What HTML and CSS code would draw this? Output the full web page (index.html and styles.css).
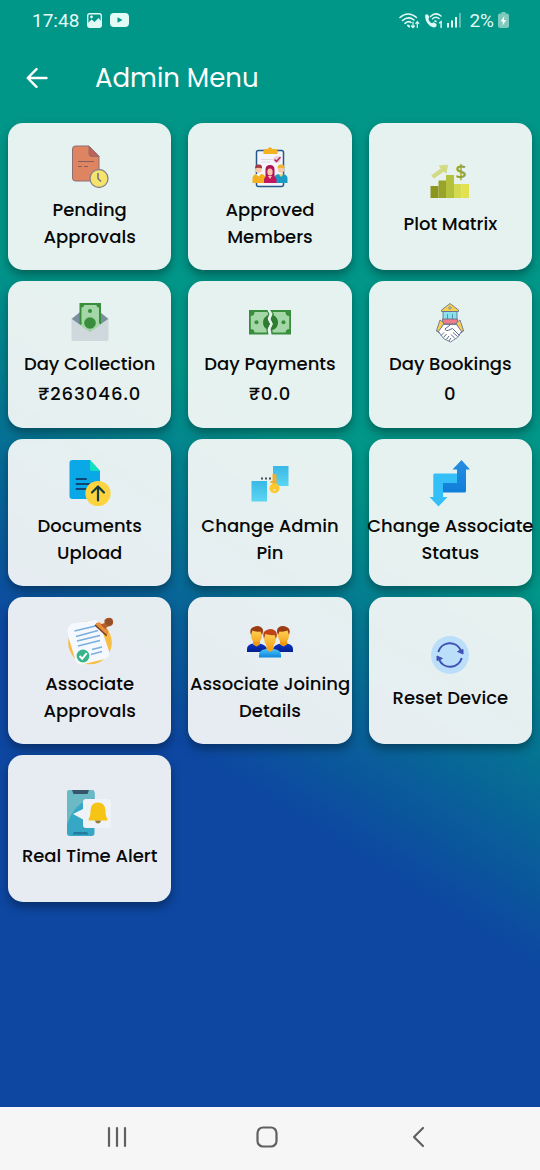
FILE: index.html
```html
<!DOCTYPE html>
<html lang="en">
<head>
  <meta charset="UTF-8" />
  <meta name="viewport" content="width=device-width, initial-scale=1.0"/>
  <title>Admin Menu</title>
  <link rel="stylesheet" href="styles.css">
</head>
<body>

  <div class="screen">
    <div class="status-bar">
      <div class="status-group">
        <span class="clock">17:48</span>
        <svg class="status-icon" width="15" height="15" viewBox="0 0 15 15">
          <rect x="0.7" y="0.7" width="13.6" height="13.6" rx="2" fill="none" stroke="#e2faf5" stroke-width="1.4"/>
          <path d="M1 10l3.5-3.500 3 2.500 4-4L14 8v6H1z" fill="#e2faf5"/>
          <circle cx="4.500" cy="4" r="1.400" fill="#e2faf5"/>
        </svg>
        <svg class="status-icon" width="19" height="14" viewBox="0 0 19 14">
          <rect width="19" height="14" rx="4" fill="#e2faf5"/>
          <path d="M7.500 4.200v5.600l5-2.800z" fill="#009688"/>
        </svg>
      </div>
      <div class="status-group status-right">
        <svg width="21" height="17" viewBox="0 0 21 17" fill="none" stroke="#e2faf5" stroke-width="1.600" stroke-linecap="round">
          <path d="M1 5.500Q9 -1.500 17.500 5.500M3.500 8.500Q9.500 3.500 15 8M6 11.300Q9.500 8.500 12 10.500"/>
          <path d="M9 13.500l1.200 1" stroke-width="2"/>
          <path d="M14 10v5.500M12.500 14l1.500 1.700 1.500-1.700M18.300 15.500V9.800M16.800 11.300l1.500-1.700 1.500 1.700" stroke-width="1.200"/>
        </svg>
        <svg width="19" height="17" viewBox="0 0 19 17" fill="none" stroke="#e2faf5" stroke-linecap="round">
          <path d="M1 3.500Q3 1 4.500 3.500L5.300 5.500Q4 6.800 4.800 8.200 6 10.500 8 11.300L9.500 10.300 12.500 12Q13 15.500 9.500 15.500 1.500 13 1 3.500z" fill="#e2faf5" stroke="none"/>
          <path d="M6.500 4.500Q11.500 -0.500 17 4M8.500 6.800Q11.800 3.700 15 6.500M11 9l1 .6" stroke-width="1.500"/>
          <path d="M15.500 10.800l1.600-1.100v5.800" stroke-width="1.400"/>
        </svg>
        <svg width="15" height="15" viewBox="0 0 15 15" fill="#e2faf5">
          <rect x="0" y="10" width="2" height="4.500"/>
          <rect x="4" y="7.500" width="2" height="7"/>
          <rect x="8" y="4" width="2" height="10.500"/>
          <rect x="12" y="0" width="2" height="14.500" opacity=".4"/>
        </svg>
        <span class="battery">2%</span>
        <svg width="11" height="17" viewBox="0 0 11 17">
          <path d="M3.500 1.500V0h4v1.500H9a2 2 0 0 1 2 2V14a2 2 0 0 1-2 2H2a2 2 0 0 1-2-2V3.500a2 2 0 0 1 2-2z" fill="#7fcabf"/>
          <path d="M6.300 4L2.700 9.500h2.200L4.500 13.500 8.300 8H6z" fill="#fff"/>
        </svg>
      </div>
    </div>

    <header class="app-bar">
      <button class="back" aria-label="Back">
        <svg width="22" height="20" viewBox="0 0 22 20" fill="none" stroke="#fff" stroke-width="2.400" stroke-linecap="round" stroke-linejoin="round">
          <path d="M20.500 10H2M10.500 1.200L1.700 10l8.800 8.800"/>
        </svg>
      </button>
      <h1>Admin Menu</h1>
    </header>

    <main class="menu">
      <a class="card" href="#pending">
        <svg class="icon" viewBox="0 0 48 48">
          <path d="M9.500 3H23l10 10.500V35a3 3 0 0 1-3 3H9.500a3 3 0 0 1-3-3V6a3 3 0 0 1 3-3z" fill="#df8460" stroke="#8f6e72"/>
          <path d="M23 3v7.500a3 3 0 0 0 3 3h7z" fill="#bd6259" stroke="#8f6e72"/>
          <path d="M12 18.500h16M12 23.500h4M18 23.500h4" stroke="#8b5c5e" stroke-width="1.200"/>
          <circle cx="33" cy="35.500" r="9" fill="#f5e36c" stroke="#86818a" stroke-width="1.300"/>
          <path d="M32 30v5.500l3 3" fill="none" stroke="#73777f" stroke-width="1.600"/>
        </svg>
        <span class="label">Pending<br>Approvals</span>
      </a>

      <a class="card" href="#members">
        <svg class="icon" viewBox="0 0 48 48">
          <rect x="10.500" y="7.500" width="27" height="36" rx="2" fill="#f4f5fb" stroke="#26588b" stroke-width="1.500"/>
          <path d="M17.500 11V8a2 2 0 0 1 2-2h2q2.500-3.500 5 0h3a2 2 0 0 1 2 2v3z" fill="#f4b223"/>
          <path d="M15 16.500h12M15 19h9" stroke="#dfd8e3"/>
          <circle cx="31" cy="16.500" r="3.500" fill="#ead1df"/>
          <path d="M28.500 16.500l2 2 4-4.500" fill="none" stroke="#b71f5c" stroke-width="1.500"/>
          <path d="M6.500 40v-4.500q0-4 5-4.500h4q4 .5 4 4.500V40z" fill="#f3b11f"/>
          <circle cx="12.500" cy="26.500" r="3.200" fill="#f7c9a8"/>
          <path d="M9 25.500Q9 21 13 21.500q3.500 0 3 4-3.500-1.500-7 0z" fill="#a33a45"/>
          <path d="M10 31l2.500 2.500L15 31" fill="#fff"/>
          <path d="M28 40v-4.500q0-4 5-4.500h3.500q5 .5 5 4.500V40z" fill="#199cc3"/>
          <circle cx="35" cy="26.500" r="3.200" fill="#f7c9a8"/>
          <path d="M31.500 25.500q0-4.500 4-4 3.500 0 3 4-3.500-1.500-7 0z" fill="#f0b52c"/>
          <path d="M32.500 31l2.500 3 2.500-3" fill="#f6d568"/>
          <path d="M19.500 35v-8.500q0-4.500 4.500-4.500t4.500 4.500V35z" fill="#ae1557"/>
          <path d="M18 40v-3q0-3.500 4-4h4.500q4 .5 4 4v3z" fill="#c4165f"/>
          <ellipse cx="24" cy="29" rx="2.700" ry="3.500" fill="#f9c6ad"/>
          <path d="M22 33h4l-2 3z" fill="#f9c6ad"/>
        </svg>
        <span class="label">Approved<br>Members</span>
      </a>

      <a class="card" href="#plots">
        <svg class="icon" viewBox="0 0 48 48">
          <path d="M4.500 29h8v12h-8z" fill="#8c951e"/>
          <path d="M12.500 23.500H20V41h-7.500z" fill="#99a32a"/>
          <path d="M20 18h8v23h-8z" fill="#b4c13d"/>
          <path d="M28 27h7.500v14H28z" fill="#d3d950"/>
          <path d="M35.500 27H43v14h-7.500z" fill="#e2e250"/>
          <path d="M5.800 18.500l9.500-7-2-2.500 8.200-.8-1.500 8-2-2.300-10 7.200z" fill="#d2db83" stroke="#d2db83"/>
          <text class="dollar" x="35" y="22" text-anchor="middle">$</text>
        </svg>
        <span class="label">Plot Matrix</span>
      </a>

      <a class="card" href="#collection">
        <svg class="icon" viewBox="0 0 48 48">
          <path d="M5.500 22L14 15h20l8.500 7L24 35z" fill="#78909c"/>
          <path d="M13.500 6h21.500v24L24 37 13.500 30z" fill="#388e3c"/>
          <path d="M18 8h12.500q0 2.500 2.500 2.500V26L24 32l-8.500-6V10.500Q18 10.500 18 8z" fill="#a5d6a7"/>
          <circle cx="24" cy="14" r="2" fill="#388e3c"/>
          <path d="M5.500 22L24 34.500 42.500 22v20a2 2 0 0 1-2 2h-33a2 2 0 0 1-2-2z" fill="#cfd8dc"/>
          <path d="M14 28l10 7 11-7.500-3.500-2.300L24 30l-6.500-4.500z" fill="#a5d6a7"/>
          <circle cx="24" cy="26" r="5.800" fill="#388e3c"/>
        </svg>
        <span class="label">Day Collection</span>
        <span class="value">₹263046.0</span>
      </a>

      <a class="card" href="#payments">
        <svg class="icon" viewBox="0 0 48 48">
          <path d="M3 13h18.500l2 4-2 5 2.500 5-2.500 5 1 5.500H3z" fill="#388e3c"/>
          <path d="M8.500 15h12.800l.8 2-1.800 5 2.500 5-2.500 5 .5 3.500H8.500Q8.500 32 4.800 32V19Q8.500 19 8.500 15z" fill="#a5d6a7"/>
          <path d="M45 13H24l2.500 4-2 5 2.500 5-2.500 5 1 5.500H45z" fill="#388e3c"/>
          <path d="M39.500 15H26.500l1.500 2-1.800 5 2.300 5-2.300 5 .5 3.500h13q0-3.500 3.500-3.500V19q-3.700 0-3.700-4z" fill="#a5d6a7"/>
          <path d="M22.500 18q-5.500 2-5.500 7.500t5.500 7.500l-1-1 2.500-5-2.500-5z" fill="#2e7d32"/>
          <path d="M27 18q5 2 5 7.500T27 33l-2-1 2-5-2-5z" fill="#2e7d32"/>
          <circle cx="10.500" cy="25.300" r="2" fill="#388e3c"/>
          <circle cx="37.500" cy="25.300" r="2" fill="#388e3c"/>
          <path d="M22.700 13l2.300 4-2 5 2.500 5-2.500 5 1.200 5.500" fill="none" stroke="#e8f3f1" stroke-width="2"/>
        </svg>
        <span class="label">Day Payments</span>
        <span class="value">₹0.0</span>
      </a>

      <a class="card" href="#bookings">
        <svg class="icon" viewBox="0 0 48 48" stroke="#596889" stroke-width=".8" stroke-linejoin="round">
          <path d="M24 6.500l8.500 6.500v1.500h-17V13z" fill="#f5d04e"/>
          <circle cx="24" cy="11" r="1.200" fill="#fff"/>
          <path d="M17 14.500h14v8H17z" fill="#8be0ee"/>
          <path d="M21.500 17v5M26.500 17v5" stroke="#4a7f9b"/>
          <path d="M16.500 22h15v5h-15z" fill="#ef7d85"/>
          <path d="M14 23l4 3-5 9-2.500-1.500z" fill="#f6ce55"/>
          <path d="M34 23l-4 3 5 9 2.500-1.500z" fill="#f6ce55"/>
          <path d="M17.500 27.500l6.500 0 6.500 0 5 7-4 6-7 4.500-7-3.500-5-7z" fill="#fff"/>
          <path d="M24 28l-5 4q1 3 5 .500l2.500-1 7 7M15 38.500l3-3M17.500 40.500l3-3.500M20.500 42.500l2.500-3.500M23 44l2-3M29 41.500l-4-4M31.500 39.500l-4.500-4" fill="none" stroke-width="1"/>
          <path d="M10 33.500l4 3M38 33.500l-4 3" fill="none"/>
        </svg>
        <span class="label">Day Bookings</span>
        <span class="value">0</span>
      </a>

      <a class="card" href="#documents">
        <svg class="icon" viewBox="0 0 48 48">
          <path d="M6.500 1H24l10 11v25a3 3 0 0 1-3 3H6.500a3 3 0 0 1-3-3V4a3 3 0 0 1 3-3z" fill="#0aa8e6"/>
          <path d="M24 1v8.500a2.500 2.500 0 0 0 2.500 2.500H34z" fill="#12e0c0"/>
          <path d="M10.500 20H20M10.500 25H23M10.500 30H20" stroke="#0b4770" stroke-width="2" stroke-linecap="round"/>
          <circle cx="32" cy="34.500" r="12.600" fill="#fdd33f"/>
          <path d="M32 41.500V28M26 33.500l6-6 6 6" fill="none" stroke="#173b3d" stroke-width="2.200" stroke-linecap="round" stroke-linejoin="round"/>
        </svg>
        <span class="label">Documents<br>Upload</span>
      </a>

      <a class="card" href="#pin">
        <svg class="icon" viewBox="0 0 48 48">
          <defs>
            <linearGradient id="tile" x1="0" y1="0" x2="0" y2="1">
              <stop offset="0" stop-color="#3ab8e6"/>
              <stop offset="1" stop-color="#5bd6f2"/>
            </linearGradient>
          </defs>
          <path d="M5.500 22H21v20.500H5.500z" fill="url(#tile)"/>
          <path d="M27 7h15.500v20H27z" fill="url(#tile)"/>
          <path d="M15 18.500h2v2h-2zM19 18.500h2v2h-2zM23 18.500h2v2h-2z" fill="#424d54"/>
          <path d="M26.500 15h4v12h-4z" fill="#f3ae2c"/>
          <path d="M24.500 22h3v2h-3z" fill="#f3ae2c"/>
          <circle cx="28.500" cy="29.300" r="5" fill="#fec72e"/>
          <circle cx="28.500" cy="31" r="1.100" fill="#fff1b5"/>
        </svg>
        <span class="label">Change Admin<br>Pin</span>
      </a>

      <a class="card" href="#status">
        <svg class="icon" viewBox="0 0 48 48">
          <defs>
            <linearGradient id="rise" x1="0" y1="1" x2="0" y2="0">
              <stop offset="0" stop-color="#0f7fda"/>
              <stop offset="1" stop-color="#278ce1"/>
            </linearGradient>
          </defs>
          <path d="M35.500 1L44 10.500h-4v21.500q0 1.500-1.500 1.500H17V24h14V10.500h-4.500z" fill="url(#rise)"/>
          <path d="M8.500 14.500H31V24H17v14h4.500L12.500 47.500 3.500 38H7.300V16q0-1.500 1.200-1.500z" fill="#35bff8"/>
        </svg>
        <span class="label">Change Associate<br>Status</span>
      </a>

      <a class="card" href="#approvals">
        <svg class="icon" viewBox="0 0 48 48">
          <circle cx="24" cy="25.500" r="21.800" fill="#f7bd45"/>
          <path d="M1.500 14Q2 6 10 6L29 3q3 0 4.500 3L43 34q1.500 6-4 8L16 47.500Q11.500 48 10 44.500L3 22z" fill="#f5f8fd"/>
          <path d="M8.500 14l21-5M10 19.500l22-6M11 24l23-5.500M12 29l22-5.500M26 32.500l10-2.500M25 37.500l11-3" stroke="#78aee0" stroke-width="1.300"/>
          <circle cx="17" cy="39" r="6.400" fill="#36b48b"/>
          <path d="M13.500 39l2.700 2.700 4.500-5.500" fill="none" stroke="#fff" stroke-width="2"/>
          <path d="M28.500 8.500l12 11 1-3.500L31 6z" fill="#6f3b20"/>
          <path d="M29.500 7.500q2-3.500 5-1.500l7 6.500q2 2-.5 5.500z" fill="#e9903d"/>
          <path d="M34.500 7.500l4-1.500Q37 1.500 43 .8q4 0 4.200 4.200 0 4-4.700 4.500-2 0-3 3z" fill="#b65f2b"/>
          <circle cx="43" cy="4.800" r="3.600" fill="#945026"/>
        </svg>
        <span class="label">Associate<br>Approvals</span>
      </a>

      <a class="card" href="#joining">
        <svg class="icon" viewBox="0 0 48 48">
          <defs>
            <linearGradient id="navy" x1="0" y1="0" x2="0" y2="1">
              <stop offset="0" stop-color="#0837ca"/>
              <stop offset="1" stop-color="#04208b"/>
            </linearGradient>
            <linearGradient id="sky" x1="0" y1="0" x2="0" y2="1">
              <stop offset="0" stop-color="#48c5fa"/>
              <stop offset="1" stop-color="#1085d9"/>
            </linearGradient>
            <linearGradient id="face" x1="0" y1="0" x2="0" y2="1">
              <stop offset="0" stop-color="#ffd85c"/>
              <stop offset="1" stop-color="#f7a51e"/>
            </linearGradient>
          </defs>
          <path d="M1 35v-3q0-4.500 6-5.500h6q7 1 8 5.500v3zM47 35v-3q0-4.500-6-5.500h-6q-7 1-8 5.500v3z" fill="url(#navy)"/>
          <path d="M7 24h7v3.500l-3.500 2-3.500-2zM34 24h7v3.500l-3.500 2-3.500-2z" fill="#ef9816"/>
          <ellipse cx="10.500" cy="18.500" rx="5.500" ry="7" fill="url(#face)"/>
          <ellipse cx="37.500" cy="18.500" rx="5.500" ry="7" fill="url(#face)"/>
          <path d="M5 18q-2-6 1.500-7.500 6-3 9.500.5 2 2 0 7l-1.500-3.500q-5 .5-8-1zM43 18q2-6-1.500-7.500-6-3-9.500.5-2 2 0 7l1.500-3.500q5 .5 8-1z" fill="#9b3c12"/>
          <path d="M13 40.500V38q0-5 7-6h8q7 1 7 6v2.500z" fill="url(#sky)"/>
          <path d="M20.500 28h7v4.500L24 35l-3.500-2.500z" fill="#f5a31b"/>
          <ellipse cx="24" cy="22.500" rx="5.800" ry="7.500" fill="url(#face)"/>
          <path d="M18 22q-2-6 1-8 6-4 10.500 0 2.500 2.500.5 8l-1.500-4q-5 .5-9-1z" fill="#c04415"/>
        </svg>
        <span class="label">Associate Joining<br>Details</span>
      </a>

      <a class="card" href="#reset">
        <svg class="icon" viewBox="0 0 48 48">
          <circle cx="24" cy="24" r="19" fill="#bbdefb"/>
          <path d="M12.300 21a12 12 0 0 1 22.400-2M35.700 27a12 12 0 0 1-22.400 2" fill="none" stroke="#3f51b5" stroke-width="2"/>
          <path d="M31.500 20.500l5.500-2v4.500zM16.500 27.500l-5.500 2v-4.500z" fill="#3f51b5" stroke="#3f51b5" stroke-linejoin="round"/>
        </svg>
        <span class="label">Reset Device</span>
      </a>

      <a class="card" href="#alert">
        <svg class="icon" viewBox="0 0 48 48">
          <path d="M4 1h21.500a3 3 0 0 1 3 3v40a3 3 0 0 1-3 3H4a3 3 0 0 1-3-3V4a3 3 0 0 1 3-3z" fill="#36a8c5"/>
          <path d="M4 1h21.500a3 3 0 0 1 3 3v5Q8 13 1 36V4a3 3 0 0 1 3-3z" fill="#6bb9c5"/>
          <path d="M6 1h17l-1.500 4h-14z" fill="#36546a"/>
          <path d="M8 43h13l1.500 2.500h-16z" fill="#237ca0"/>
          <path d="M20 10h22q3 0 3 3v23q0 3-3 3H20q-3 0-3-3v-5.500L7 25l10-5v-7q0-3 3-3z" fill="#eff3f8"/>
          <path d="M32 13.500q7 0 7.500 8 0 6 1.800 8v2H22.700v-2q1.800-2 1.800-8 .5-8 7.500-8z" fill="#f6c414"/>
          <path d="M29 31.500h6q-.5 3-3 3t-3-3z" fill="#9a793d"/>
        </svg>
        <span class="label">Real Time Alert</span>
      </a>
    </main>
  </div>

  <nav class="nav-bar">
    <button aria-label="Recent apps">
      <svg width="22" height="22" viewBox="0 0 22 22" stroke="#606060" stroke-width="2.200" stroke-linecap="round">
        <path d="M2 2v18M10 2v18M18 2v18"/>
      </svg>
    </button>
    <button aria-label="Home">
      <svg width="22" height="22" viewBox="0 0 22 22" fill="none" stroke="#606060" stroke-width="2.200">
        <rect x="1.500" y="1.500" width="19" height="19" rx="5.500"/>
      </svg>
    </button>
    <button aria-label="Back">
      <svg width="22" height="22" viewBox="0 0 22 22" fill="none" stroke="#606060" stroke-width="2.200" stroke-linecap="round" stroke-linejoin="round">
        <path d="M17 2l-9 9 9 9"/>
      </svg>
    </button>
  </nav>

</body>
</html>
```

FILE: styles.css
```css
* {
  box-sizing: border-box;
}
body {
  margin: 0;
  min-height: 100vh;
  display: flex;
  flex-direction: column;
  font-family: Poppins, Inter, "Noto Sans", sans-serif;
  color: #080808;
}
button {
  border: none;
  background: none;
  padding: 0;
  cursor: pointer;
  display: flex;
  align-items: center;
  justify-content: center;
}
.screen {
  flex: 1;
  background: linear-gradient(212deg, #009688 41%, #0d47a1 67%);
}

.status-bar {
  display: flex;
  justify-content: space-between;
  align-items: center;
  height: 40px;
  padding: 0 31px 0 32px;
  font-family: Roboto, sans-serif;
  font-size: 19px;
  color: #e2faf5;
}
.status-group {
  display: flex;
  align-items: center;
  gap: 8px;
}
.status-right {
  gap: 4px;
}
.battery {
  margin-left: 3px;
}

.app-bar {
  display: flex;
  align-items: center;
  gap: 47px;
  height: 76px;
  padding: 0 26px;
}
.app-bar h1 {
  margin: 0;
  font-size: 26px;
  font-weight: 400;
  color: #fff;
}

.menu {
  display: grid;
  grid-template-columns: repeat(3, minmax(0, 1fr));
  grid-auto-rows: 147px;
  gap: 11px 17px;
  padding: 7px 8px;
}
.card {
  display: flex;
  flex-direction: column;
  align-items: center;
  justify-content: center;
  border-radius: 15px;
  background: rgba(250, 250, 248, 0.92);
  box-shadow: 0 5px 10px rgba(0, 0, 0, 0.35);
  color: inherit;
  text-align: center;
  text-decoration: none;
  white-space: nowrap;
  font-size: 18px;
  font-weight: 500;
  line-height: 27px;
}
.icon {
  width: 48px;
  height: 48px;
  margin-bottom: 5px;
  overflow: visible;
}
.dollar {
  font-family: "Open Sans", sans-serif;
  font-size: 20px;
  font-weight: 600;
  fill: #8fa43a;
}
.value {
  margin: 3px 0 5px;
  letter-spacing: 1px;
}

.nav-bar {
  display: flex;
  justify-content: center;
  height: 63px;
  padding: 0 5px 3px 0;
  background: #f6f6f6;
}
.nav-bar button {
  width: 28%;
}
```
